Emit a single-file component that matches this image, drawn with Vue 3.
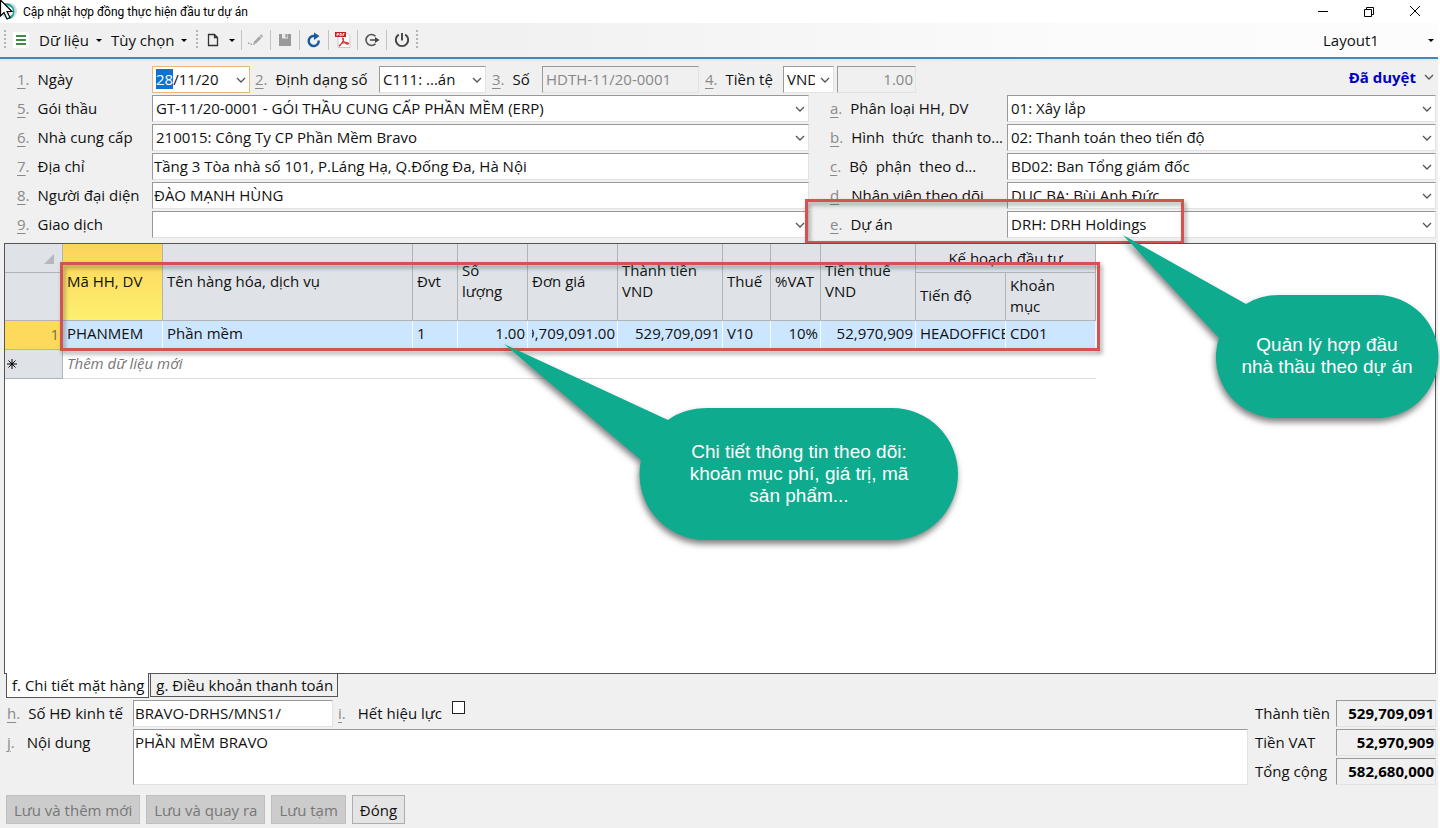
<script setup>
import { onMounted, ref } from 'vue'

const dateInput = ref(null)
const expired = ref(false)

const leftRows = [
  { key: '5', label: 'Gói thầu', value: 'GT-11/20-0001 - GÓI THẦU CUNG CẤP PHẦN MỀM (ERP)', combo: true },
  { key: '6', label: 'Nhà cung cấp', value: '210015: Công Ty CP Phần Mềm Bravo', combo: true },
  { key: '7', label: 'Địa chỉ', value: 'Tầng 3 Tòa nhà số 101, P.Láng Hạ, Q.Đống Đa, Hà Nội', combo: false },
  { key: '8', label: 'Người đại diện', value: 'ĐÀO MẠNH HÙNG', combo: false },
  { key: '9', label: 'Giao dịch', value: '', combo: true },
]

const rightRows = [
  { key: 'a', label: 'Phân loại HH, DV', value: '01: Xây lắp' },
  { key: 'b', label: 'Hình  thức  thanh to...', value: '02: Thanh toán theo tiến độ' },
  { key: 'c', label: 'Bộ  phận  theo d...', value: 'BD02: Ban Tổng giám đốc' },
  { key: 'd', label: 'Nhân viên theo dõi', value: 'DUC BA: Bùi Anh Đức' },
  { key: 'e', label: 'Dự án', value: 'DRH: DRH Holdings', framed: true },
]

const totals = [
  { id: 'amount', label: 'Thành tiền', value: '529,709,091' },
  { id: 'vat', label: 'Tiền VAT', value: '52,970,909' },
  { id: 'total', label: 'Tổng cộng', value: '582,680,000' },
]

onMounted(() => {
  dateInput.value.focus()
  dateInput.value.setSelectionRange(0, 2)
})
</script>

<template>
  <div class="window">
    <header class="titlebar">
      <svg class="app-icon" width="20" height="23" viewBox="0 0 20 23" aria-hidden="true">
        <circle cx="9" cy="11" r="8" fill="#c4e3de" />
        <path d="M5 4.500A7.200 7.200 0 0 1 9 18.200" fill="none" stroke="#279b8c" stroke-width="2.400" />
        <path d="M8 7.500A3.800 3.800 0 0 1 9 15" fill="none" stroke="#fff" stroke-width="2" />
        <path d="M0.500 0 V16 L4 12.500 L7 19 L10 17.500 L7 11.500 H12Z" fill="#fff" stroke="#000" stroke-width="1.200" />
      </svg>
      <h1 class="title">Cập nhật hợp đồng thực hiện đầu tư dự án</h1>
      <button class="win-btn" aria-label="Thu nhỏ">
        <svg width="12" height="12" viewBox="0 0 12 12"><path d="M1 5.500H11" stroke="#000" /></svg>
      </button>
      <button class="win-btn" aria-label="Khôi phục">
        <svg width="12" height="12" viewBox="0 0 12 12" fill="none" stroke="#000">
          <path d="M1.500 3.500H8.500V10.500H1.500Z M3.500 3.500V1.500H10.500V8.500H8.500" />
        </svg>
      </button>
      <button class="win-btn" aria-label="Đóng cửa sổ">
        <svg width="12" height="12" viewBox="0 0 12 12"><path d="M1 0L11 10M11 0L1 10" stroke="#000" /></svg>
      </button>
    </header>

    <nav class="toolbar">
      <span class="grip"></span>
      <span class="menu-icon">
        <svg width="16" height="16" viewBox="0 0 16 16"><path d="M3 4H13M3 8H13M3 12H13" stroke="#3c8a45" stroke-width="2" /></svg>
      </span>
      <button class="menu">Dữ liệu<i class="caret"></i></button>
      <button class="menu">Tùy chọn<i class="caret"></i></button>
      <span class="grip"></span>
      <button class="tool wide" aria-label="Tạo mới">
        <svg width="16" height="16" viewBox="0 0 16 16" fill="none" stroke="#333" stroke-width="1.300">
          <path d="M3.500 2.500H9.500L12.500 5.500V13.500H3.500Z M9.500 2.500V5.500H12.500" />
        </svg>
        <i class="caret"></i>
      </button>
      <button class="tool" aria-label="Sửa">
        <svg width="16" height="16" viewBox="0 0 16 16" fill="#a6a6a6">
          <path d="M6 9.500L11.500 4L13.500 6L8 11.500L5.500 12Z M12 3.500L13.200 2.300L15.200 4.300L14 5.500Z" />
          <path d="M0 10.500H1.500V12H0Z M2.500 11.500H4V13H2.500Z M5 12H6.500V13H5Z" />
        </svg>
      </button>
      <button class="tool" aria-label="Lưu">
        <svg width="16" height="16" viewBox="0 0 16 16">
          <path d="M2 2H14V14H2Z" fill="#999" />
          <path d="M5 2H11V6.500H5Z" fill="#e8e8e8" /><path d="M8.500 2H10.500V5.500H8.500Z" fill="#999" />
        </svg>
      </button>
      <button class="tool" aria-label="Làm mới">
        <svg width="16" height="16" viewBox="0 0 16 16">
          <path d="M9.500 4H7.500A5 5 0 1 0 12.700 8.500" fill="none" stroke="#175a9e" stroke-width="2.400" />
          <path d="M8 0.500L13.500 4L8 8Z" fill="#175a9e" />
        </svg>
      </button>
      <button class="tool" aria-label="Xuất PDF">
        <svg width="16" height="18" viewBox="0 0 16 18">
          <path d="M3 2H11.500L15 5.500V16.500H3Z" fill="#fff" stroke="#c9c9c9" />
          <path d="M0 1H11V6H0Z" fill="#b3261e" />
          <path d="M2 5V2.500H3.500V3.800H2M5 2.500V4.700H6.300V2.500ZM8 5V2.500H9.500M8 3.800H9.200" fill="none" stroke="#fff" stroke-width="0.800" />
          <path d="M7.500 7C9.500 7 8 11 5 14.500C3.500 16 4 13.500 8 12C12 10.500 15 12.500 13 13C11 13.500 7.500 10 7.500 7Z" fill="none" stroke="#d23b2d" stroke-width="1.200" />
        </svg>
      </button>
      <button class="tool" aria-label="Xuất">
        <svg width="16" height="16" viewBox="0 0 16 16">
          <path d="M11.500 4.200A5.500 5.500 0 1 0 11.500 11.800" fill="none" stroke="#555" stroke-width="1.600" />
          <path d="M6 7.200H11V5L15.500 8L11 11V8.800H6Z" fill="#444" />
        </svg>
      </button>
      <button class="tool last" aria-label="Thoát">
        <svg width="16" height="16" viewBox="0 0 16 16" fill="none" stroke="#444" stroke-width="1.900">
          <path d="M4.800 2.600A6.200 6.200 0 1 0 11.200 2.600M8 1V8.500" />
        </svg>
      </button>
      <span class="grip"></span>
      <button class="layout-select"><span>Layout1</span><i class="caret"></i></button>
    </nav>

    <main class="body">
      <form class="form" @submit.prevent>
        <div class="row top-row">
          <label class="lbl lead" for="f1"><u>1</u>.<span>Ngày</span></label>
          <div class="combo date">
            <input id="f1" ref="dateInput" class="field active" value="28/11/20" />
            <svg class="chev" viewBox="0 0 10 6"><path d="M1 1L5 5L9 1" /></svg>
          </div>
          <label class="lbl" for="f2"><u>2</u>.<span>Định dạng số</span></label>
          <div class="combo format">
            <select id="f2" class="field"><option>C111: ...án</option></select>
            <svg class="chev" viewBox="0 0 10 6"><path d="M1 1L5 5L9 1" /></svg>
          </div>
          <label class="lbl" for="f3"><u>3</u>.<span>Số</span></label>
          <input id="f3" class="field number" value="HDTH-11/20-0001" disabled />
          <label class="lbl" for="f4"><u>4</u>.<span>Tiền tệ</span></label>
          <div class="combo currency">
            <select id="f4" class="field"><option>VND</option></select>
            <svg class="chev" viewBox="0 0 10 6"><path d="M1 1L5 5L9 1" /></svg>
          </div>
          <input class="field rate" value="1.00" aria-label="Tỷ giá" disabled />
          <button class="status" type="button">
            Đã duyệt
            <svg width="10" height="6" viewBox="0 0 10 6"><path d="M1 1L5 5L9 1" /></svg>
          </button>
        </div>

        <div class="columns">
          <div class="col left-col">
            <div v-for="r in leftRows" :key="r.key" class="row">
              <label class="lbl lead" :for="'f' + r.key"><u>{{ r.key }}</u>.<span>{{ r.label }}</span></label>
              <div v-if="r.combo" class="combo grow">
                <select :id="'f' + r.key" class="field"><option>{{ r.value }}</option></select>
                <svg class="chev" viewBox="0 0 10 6"><path d="M1 1L5 5L9 1" /></svg>
              </div>
              <input v-else :id="'f' + r.key" class="field grow" :value="r.value" />
            </div>
          </div>
          <div class="col right-col">
            <div v-for="r in rightRows" :key="r.key" class="row">
              <label class="lbl side" :for="'f' + r.key"><u>{{ r.key }}</u>.<span>{{ r.label }}</span></label>
              <div class="combo grow">
                <select :id="'f' + r.key" class="field"><option>{{ r.value }}</option></select>
                <svg class="chev" viewBox="0 0 10 6"><path d="M1 1L5 5L9 1" /></svg>
              </div>
              <div v-if="r.framed" class="frame frame-project"></div>
            </div>
          </div>
        </div>
      </form>

      <section class="sheet">
        <div class="table-wrap">
          <table>
            <colgroup>
              <col class="w58" /><col class="w100" /><col class="w250" /><col class="w45" /><col class="w70" /><col class="w90" />
              <col class="w105" /><col class="w48" /><col class="w50" /><col class="w95" /><col class="w90" /><col class="w90" />
            </colgroup>
            <thead>
              <tr class="h1">
                <th class="corner"><svg width="10" height="10" viewBox="0 0 10 10"><path d="M10 0V10H0Z" fill="#b4b8bc" /></svg></th>
                <th rowspan="2" class="sorted">Mã HH, DV</th>
                <th rowspan="2">Tên hàng hóa, dịch vụ</th>
                <th rowspan="2">Đvt</th>
                <th rowspan="2">Số<br />lượng</th>
                <th rowspan="2">Đơn giá</th>
                <th rowspan="2">Thành tiền<br />VND</th>
                <th rowspan="2">Thuế</th>
                <th rowspan="2">%VAT</th>
                <th rowspan="2">Tiền thuế<br />VND</th>
                <th colspan="2" class="group">Kế hoạch đầu tư</th>
              </tr>
              <tr class="h2">
                <th></th>
                <th>Tiến độ</th>
                <th>Khoản<br />mục</th>
              </tr>
            </thead>
            <tbody>
              <tr class="data">
                <th class="idx">1</th>
                <td>PHANMEM</td>
                <td>Phần mềm</td>
                <td>1</td>
                <td class="num">1.00</td>
                <td class="num"><span class="overflow">529,709,091.00</span></td>
                <td class="num">529,709,091</td>
                <td>V10</td>
                <td class="num">10%</td>
                <td class="num">52,970,909</td>
                <td>HEADOFFICE</td>
                <td>CD01</td>
              </tr>
              <tr class="new">
                <th>
                  <svg width="10" height="10" viewBox="0 0 10 10"><path d="M5 0V10M0 5H10M1.500 1.500L8.500 8.500M8.500 1.500L1.500 8.500" stroke="#000" /></svg>
                </th>
                <td colspan="11">Thêm dữ liệu mới</td>
              </tr>
            </tbody>
          </table>
          <div class="frame frame-table"></div>
          <div class="callout callout-detail">
            <svg width="454" height="196" viewBox="0 0 454 196" aria-hidden="true">
              <path d="M0 0L164 76Q180 64 204 64H388A66 66 0 0 1 388 196H202A66 66 0 0 1 137 116Z" />
            </svg>
            <p>Chi tiết thông tin theo dõi:<br />khoản mục phí, giá trị, mã<br />sản phẩm...</p>
          </div>
        </div>
        <div class="callout callout-project">
          <svg width="315" height="183" viewBox="0 0 315 183" aria-hidden="true">
            <path d="M0 0L123 69Q137 60 156 60H254A61 61 0 0 1 254 183H156A61 61 0 0 1 96 103Z" />
          </svg>
          <p>Quản lý hợp đầu<br />nhà thầu theo dự án</p>
        </div>
      </section>

      <div class="tabs" role="tablist">
        <button class="tab on" role="tab" aria-selected="true">f. Chi tiết mặt hàng</button>
        <button class="tab" role="tab" aria-selected="false">g. Điều khoản thanh toán</button>
      </div>

      <section class="footer">
        <div class="notes">
          <div class="row">
            <label class="lbl foot" for="fh"><u>h</u>.<span>Số HĐ kinh tế</span></label>
            <input id="fh" class="field contract" value="BRAVO-DRHS/MNS1/" />
            <label class="lbl expired" for="fi"><u>i</u>.<span>Hết hiệu lực</span></label>
            <input id="fi" v-model="expired" class="check" type="checkbox" />
          </div>
          <div class="row note-row">
            <label class="lbl foot" for="fj"><u>j</u>.<span class="after-j">Nội dung</span></label>
            <textarea id="fj" class="field note">PHẦN MỀM BRAVO</textarea>
          </div>
        </div>
        <div class="totals">
          <div v-for="t in totals" :key="t.id" class="row">
            <label :for="t.id">{{ t.label }}</label>
            <input :id="t.id" class="field sum" :value="t.value" readonly />
          </div>
        </div>
      </section>

      <div class="actions">
        <button disabled>Lưu và thêm mới</button>
        <button disabled>Lưu và quay ra</button>
        <button disabled>Lưu tạm</button>
        <button>Đóng</button>
      </div>
    </main>
  </div>
</template>

<style>
body {
  margin: 0;
  background: #fff;
}
</style>

<style scoped>
* {
  box-sizing: border-box;
}
.window {
  min-height: 100vh;
  margin-right: 2px;
  display: flex;
  flex-direction: column;
  background: #f0f0f0;
  color: #111;
  font-family: "Open Sans", "Noto Sans", sans-serif;
  font-size: 15px;
  line-height: 22px;
}
button,
input,
select,
textarea {
  font: inherit;
  color: inherit;
  margin: 0;
}
button {
  border: 0;
  background: none;
  padding: 0;
}
.titlebar {
  height: 23px;
  display: flex;
  align-items: center;
  background: #fff;
}
.app-icon {
  margin-right: 3px;
}
.title {
  flex: 1;
  margin: 0;
  font-family: Roboto, "Open Sans", sans-serif;
  font-size: 12px;
  font-weight: 400;
  color: #000;
}
.win-btn {
  width: 46px;
  display: flex;
  justify-content: center;
}
.toolbar {
  height: 36px;
  display: flex;
  align-items: center;
  padding-left: 4px;
  background: linear-gradient(90deg, #f0f0f0 0, #f1f1f1 35%, #fbfbfb 75%, #fcfcfc);
  border-bottom: 2px solid #4289b8;
}
.grip {
  width: 2px;
  height: 20px;
  background: repeating-linear-gradient(#b4b4b4 0 2px, transparent 2px 4px);
}
.menu-icon {
  display: flex;
  margin: 0 10px 0 7px;
  background: #fff;
}
.menu {
  display: flex;
  align-items: center;
  gap: 7px;
  margin-right: 9px;
}
.caret {
  border: 3px solid transparent;
  border-top-color: #000;
  border-bottom: 0;
}
.tool {
  width: 29px;
  height: 20px;
  display: flex;
  align-items: center;
  justify-content: center;
  border-right: 1px solid #c4c4c4;
}
.tool.wide {
  width: 44px;
  gap: 8px;
}
.tool.last {
  border-right: 0;
}
.layout-select {
  margin-left: auto;
  width: 118px;
  display: flex;
  align-items: center;
  justify-content: space-between;
  padding: 0 4px 0 3px;
}
.body {
  flex: 1;
  display: flex;
  flex-direction: column;
  padding: 7px 2px 4px 4px;
  box-shadow: inset 0 2px 1px #dcecf6;
}
.row {
  display: flex;
  position: relative;
  min-height: 27px;
}
.lbl {
  display: flex;
  flex: none;
  padding-top: 2px;
  color: #8a8a8a;
  white-space: pre;
}
.lbl span {
  color: #111;
}
.lbl u {
  text-underline-offset: 3px;
}
.lbl u + span {
  margin-left: 8px;
}
.lead {
  width: 148px;
  padding-left: 13px;
}
.side {
  width: 177px;
}
.field {
  height: 27px;
  width: 100%;
  min-width: 0;
  padding: 0 2px 2px 1px;
  background: #fff;
  border: 1px solid #e2e2e2;
  border-top-color: #999;
  border-left-color: #999;
  border-radius: 0;
  outline: 0;
  appearance: none;
}
.field:disabled {
  background: #f0f0f0;
  color: #888;
  opacity: 1;
}
select.field {
  padding: 0 18px 2px 3px;
}
.combo {
  position: relative;
}
.chev {
  position: absolute;
  right: 4px;
  top: 11px;
  width: 10px;
  height: 6px;
  pointer-events: none;
}
.chev path,
.status path {
  fill: none;
  stroke: #555;
  stroke-width: 1.300;
}
.grow {
  flex: 1;
}
.top-row {
  margin-right: 2px;
}
.date { width: 98px; margin-right: 5px; }
.format { width: 107px; margin-right: 6px; }
.field.number { width: 157px; margin-right: 6px; padding-left: 3px; }
.currency { width: 51px; margin-right: 3px; }
.rate { width: 79px; text-align: right; }
label[for="f2"] { width: 124px; }
label[for="f3"] { width: 50px; }
label[for="f4"] { width: 78px; }
.field.active {
  border-color: #e9b878;
  padding-left: 3px;
}
.active::selection {
  background: #0a74d6;
  color: #fff;
}
.status {
  display: flex;
  align-items: center;
  gap: 8px;
  margin-left: auto;
  align-self: flex-start;
  font-weight: 700;
  color: #0000c4;
}
.columns {
  display: grid;
  grid-template-columns: 805fr 606fr;
  gap: 21px;
  margin-top: 2px;
}
.col {
  display: grid;
  gap: 2px;
}
.form {
  margin-bottom: 5px;
}
.sheet {
  position: relative;
  flex: 1;
  background: #fff;
  border: 1px solid #555;
}
.table-wrap {
  position: relative;
  width: 1091px;
}
table {
  width: 1091px;
  table-layout: fixed;
  border-collapse: separate;
  border-spacing: 0;
}
.w45 { width: 45px; }
.w48 { width: 48px; }
.w50 { width: 50px; }
.w58 { width: 58px; }
.w70 { width: 70px; }
.w90 { width: 90px; }
.w95 { width: 95px; }
.w100 { width: 100px; }
.w105 { width: 105px; }
.w250 { width: 250px; }
th,
td {
  padding: 0 3px 2px 4px;
  font-weight: 400;
  text-align: left;
  white-space: nowrap;
  overflow: hidden;
}
th {
  background: #dfe3e8;
  border-right: 1px solid #b0b4b9;
  border-bottom: 1px solid #b0b4b9;
}
.h1 { height: 29px; }
.h2 { height: 48px; }
.data { height: 29px; }
.new { height: 29px; }
thead th {
  line-height: 21px;
}
.group {
  text-align: center;
  padding: 0;
}
.corner {
  text-align: right;
  padding: 0 8px 0 0;
}
.sorted {
  background: linear-gradient(#fdd35b, #fdf06e);
}
.data td {
  background: #cde6ff;
  padding-bottom: 4px;
  border-right: 1px solid #f4faff;
  border-bottom: 1px solid #b0b4b9;
}
.data .idx {
  background: #fdd95c;
  text-align: right;
  color: #7b6d3a;
}
.data .num {
  padding-right: 2px;
  text-align: right;
}
.overflow {
  display: flex;
  justify-content: flex-end;
  overflow: hidden;
}
.new td {
  color: #777;
  font-style: italic;
  border-bottom: 1px solid #ddd;
}
.new th {
  padding-left: 2px;
}
.frame {
  position: absolute;
  border: 3px solid #d35252;
  filter: drop-shadow(2px 3px 2px rgba(60, 60, 60, 0.5));
  pointer-events: none;
}
.frame-project {
  left: -25px;
  top: -12px;
  width: 379px;
  height: 45px;
}
.frame-table {
  left: 55px;
  top: 18px;
  right: -4px;
  height: 89px;
}
.callout {
  position: absolute;
  z-index: 2;
  color: #fff;
  font-family: "Liberation Sans", Arial, sans-serif;
  font-size: 19px;
  text-align: center;
}
.callout svg {
  display: block;
  overflow: visible;
  filter: drop-shadow(-1px 4px 3px rgba(0, 0, 0, 0.5));
}
.callout path {
  fill: #0fab8e;
}
.callout p {
  position: absolute;
  right: 0;
  margin: 0;
}
.callout-detail {
  left: 499px;
  top: 100px;
}
.callout-detail p {
  top: 97px;
  width: 318px;
}
.callout-project {
  right: -3px;
  top: -9px;
}
.callout-project p {
  top: 99px;
  width: 222px;
}
.tabs {
  display: flex;
  align-items: flex-start;
  height: 26px;
  padding-left: 2px;
}
.tab {
  height: 23px;
  padding: 0 4px 0 5px;
  border: 1px solid #555;
  border-top: 0;
  line-height: 22px;
}
.tab.on {
  position: relative;
  height: 25px;
  margin: -1px 1px 0 0;
  background: #fff;
  line-height: 25px;
}
.footer {
  display: flex;
  justify-content: space-between;
  gap: 7px;
}
.notes {
  flex: 1;
  display: grid;
  gap: 2px;
}
.foot {
  width: 129px;
  padding-left: 3px;
}
.foot u + .after-j {
  margin-left: 12px;
}
.contract {
  width: 200px;
  margin-right: 5px;
}
.expired u + span {
  margin-left: 12px;
}
.check {
  appearance: none;
  width: 13px;
  height: 13px;
  margin: 1px 0 0 10px;
  background: #fff;
  border: 1px solid #222;
}
.check:checked {
  background: #222;
}
.field.note {
  height: 56px;
  flex: 1;
  padding: 1px;
  resize: none;
}
.totals {
  width: 181px;
  display: grid;
  gap: 2px;
}
.totals label {
  flex: 1;
  padding-top: 2px;
}
.totals .sum {
  width: 100px;
  padding: 0 1px 2px;
  background: #f0f0f0;
  text-align: right;
  font-weight: 700;
  color: #000;
}
.actions {
  display: flex;
  gap: 6px;
  margin-top: 10px;
  padding-left: 2px;
}
.actions button {
  height: 29px;
  padding: 0 7px;
  background: #e4e4e4;
  border: 1px solid #adadad;
}
.actions button:disabled {
  background: #cccccc;
  border-color: #bfbfbf;
  color: #777;
}
</style>
